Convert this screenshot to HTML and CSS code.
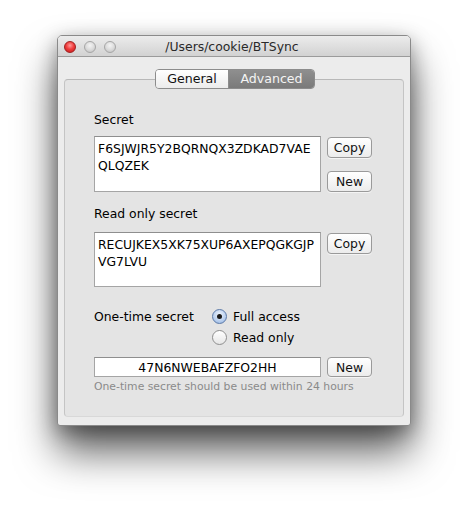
FILE: index.html
```html
<!DOCTYPE html>
<html>
<head>
<meta charset="utf-8">
<link rel="stylesheet" href="styles.css">
</head>
<body>
<div class="window">
  <div class="titlebar">
    <div class="lights">
      <span class="light red"></span>
      <span class="light gray"></span>
      <span class="light gray"></span>
    </div>
    <div class="title">/Users/cookie/BTSync</div>
  </div>
  <div class="content">
    <div class="tabs">
      <span class="tab">General</span>
      <span class="tab active">Advanced</span>
    </div>
    <div class="box">
      <div class="label">Secret</div>
      <div class="row">
        <div class="field">F6SJWJR5Y2BQRNQX3ZDKAD7VAE<br>QLQZEK</div>
        <div class="buttons">
          <span class="btn">Copy</span>
          <span class="btn new">New</span>
        </div>
      </div>
      <div class="label second">Read only secret</div>
      <div class="row second-row">
        <div class="field short">RECUJKEX5XK75XUP6AXEPQGKGJP<br>VG7LVU</div>
        <div class="buttons">
          <span class="btn">Copy</span>
        </div>
      </div>
      <div class="onetime">
        <div class="label">One-time secret</div>
        <div class="radios">
          <div class="radio-row"><span class="radio on"></span><span>Full access</span></div>
          <div class="radio-row"><span class="radio"></span><span>Read only</span></div>
        </div>
      </div>
      <div class="row small">
        <div class="input">47N6NWEBAFZFO2HH</div>
        <span class="btn">New</span>
      </div>
      <div class="hint">One-time secret should be used within 24 hours</div>
    </div>
  </div>
</div>
</body>
</html>
```
FILE: styles.css
```css
html, body {
  margin: 0;
  padding: 0;
  background: #ffffff;
}
body {
  font-family: "DejaVu Sans", "Liberation Sans", sans-serif;
  font-size: 12.4px;
  color: #000;
  padding: 35px 0 0 57px;
  min-height: 505px;
  box-sizing: border-box;
}
.window {
  width: 354px;
  height: 391px;
  box-sizing: border-box;
  background: #ececec;
  border: 1px solid #8a8a8a;
  border-radius: 5px 5px 3px 3px;
  box-shadow: 0 26px 40px 0 rgba(0,0,0,0.62), 0 6px 20px rgba(0,0,0,0.35);
  display: flex;
  flex-direction: column;
}
.titlebar {
  height: 21px;
  box-sizing: border-box;
  border-bottom: 1px solid #9b9b9b;
  border-radius: 4px 4px 0 0;
  background: linear-gradient(#ececec, #d2d2d2);
  display: flex;
  align-items: center;
}
.lights {
  display: flex;
  gap: 8px;
  padding-left: 6px;
  padding-top: 1px;
}
.light {
  width: 12px;
  height: 12px;
  box-sizing: border-box;
  border-radius: 50%;
}
.light.red {
  background: radial-gradient(circle at 50% 35%, #ff9a9a 0%, #f04040 45%, #c41414 100%);
  border: 1px solid #a02020;
}
.light.gray {
  background: radial-gradient(circle at 50% 35%, #f4f4f4 0%, #dcdcdc 50%, #bdbdbd 100%);
  border: 1px solid #a6a6a6;
}
.title {
  flex: 1;
  text-align: center;
  margin-right: 62px;
  font-size: 12.4px;
  color: #2a2a2a;
  line-height: 16px;
  padding-top: 2px;
}
.content {
  flex: 1;
  display: flex;
  flex-direction: column;
  padding: 12px 6px 8px 6px;
}
.tabs {
  display: flex;
  align-self: center;
  height: 20px;
  box-sizing: border-box;
  border: 1px solid #8c8c8c;
  border-radius: 4px;
  overflow: hidden;
  position: relative;
  z-index: 1;
  margin-left: 2px;
}
.tab {
  display: flex;
  align-items: center;
  justify-content: center;
  font-size: 12.6px;
  line-height: 16px;
  background: linear-gradient(#ffffff, #ececec);
  color: #111;
}
.tab:first-child {
  width: 72px;
  border-right: 1px solid #8c8c8c;
}
.tab.active {
  width: 85px;
  background: linear-gradient(#8f8f8f, #7a7a7a);
  color: #f4f4f4;
}
.box {
  flex: 1;
  margin-top: -10px;
  background: #e4e4e4;
  border: 1px solid #c4c4c4;
  border-top-color: #b8b8b8;
  border-bottom-color: #d8d8d8;
  border-radius: 4px;
  padding: 32px 0 0 29px;
  display: flex;
  flex-direction: column;
}
.label {
  line-height: 16px;
  height: 16px;
}
.label.second {
  margin-top: 14px;
}
.row {
  display: flex;
  align-items: flex-start;
  gap: 6px;
  margin-top: 8px;
}
.row.second-row {
  margin-top: 10px;
}
.field {
  width: 227px;
  height: 56px;
  box-sizing: border-box;
  background: #fff;
  border: 1px solid #a5a5a5;
  border-top-color: #8e8e8e;
  padding: 3px 0 0 3px;
  line-height: 17px;
  font-size: 12.4px;
}
.field.short {
  height: 55px;
}
.buttons {
  display: flex;
  flex-direction: column;
  gap: 13px;
  padding-top: 1px;
}
.btn {
  width: 45px;
  height: 21px;
  box-sizing: border-box;
  border: 1px solid #9a9a9a;
  border-radius: 4px;
  background: linear-gradient(#ffffff, #ececec);
  display: flex;
  align-items: center;
  justify-content: center;
  font-size: 12.4px;
  color: #111;
  box-shadow: 0 1px 0 rgba(255,255,255,0.6);
}
.onetime {
  display: flex;
  margin-top: 21px;
}
.onetime .label {
  width: 118px;
  margin-top: 1px;
}
.radios {
  display: flex;
  flex-direction: column;
  gap: 5px;
}
.radio-row {
  display: flex;
  align-items: center;
  gap: 6px;
  height: 16px;
}
.radio {
  width: 15px;
  height: 15px;
  box-sizing: border-box;
  border-radius: 50%;
  border: 1px solid #8e8e8e;
  background: linear-gradient(#ffffff, #e6e6e6);
  display: flex;
  align-items: center;
  justify-content: center;
}
.radio.on {
  border-color: #5c7aa8;
  background: radial-gradient(circle at 50% 35%, #eef4fc 0%, #b9cfee 60%, #8fb0de 100%);
}
.radio.on::after {
  content: "";
  width: 5px;
  height: 5px;
  border-radius: 50%;
  background: #1a1a1a;
}
.row.small {
  margin-top: 12px;
}
.input {
  width: 227px;
  height: 20px;
  box-sizing: border-box;
  background: #fff;
  border: 1px solid #a5a5a5;
  border-top-color: #8e8e8e;
  display: flex;
  align-items: center;
  justify-content: center;
  font-size: 12.4px;
}
.row.small .btn {
  height: 20px;
}
.hint {
  margin-top: 3px;
  font-size: 10.8px;
  line-height: 14px;
  color: #8a8a8a;
}
```
